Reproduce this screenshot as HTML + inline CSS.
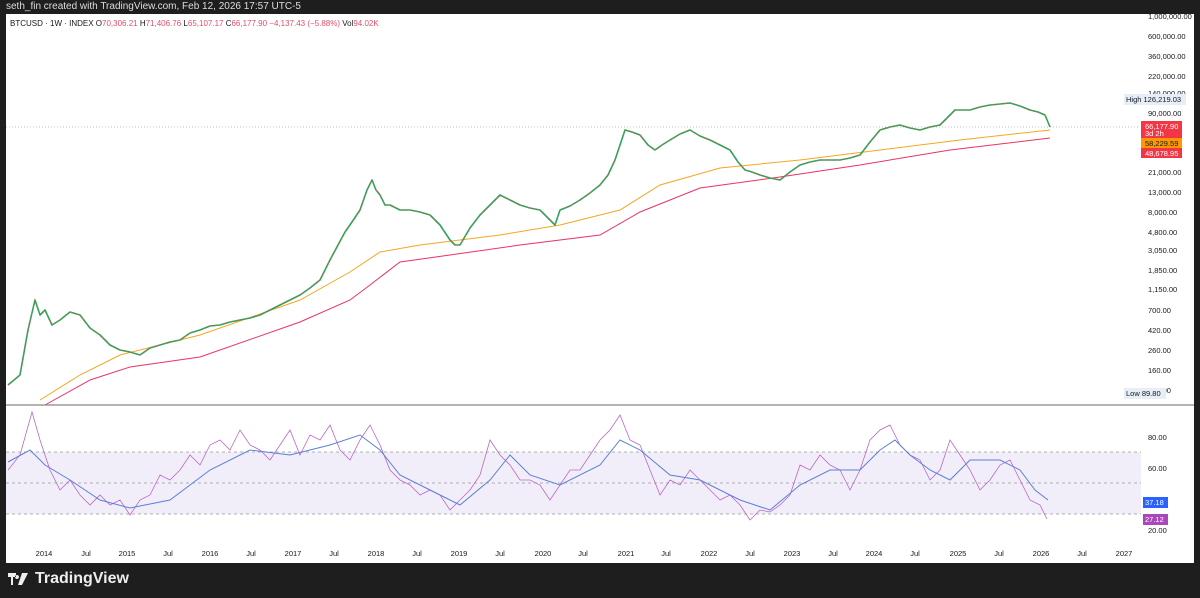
<!DOCTYPE html>
<html><head><meta charset="utf-8"><style>
html,body{margin:0;padding:0;width:1200px;height:598px;background:#1e1e1e;overflow:hidden;font-family:"Liberation Sans",sans-serif}
.top{position:absolute;left:6px;top:0;height:14px;color:#ddd;font-size:10px;line-height:14px}
.chart{position:absolute;left:6px;top:14px;width:1188px;height:549px;background:#fff}
.logo{position:absolute;left:8px;top:570px;color:#eee;font-size:16px;font-weight:bold;display:flex;align-items:center;gap:5px}
</style></head><body>
<div class="top">seth_fin created with TradingView.com, Feb 12, 2026 17:57 UTC-5</div>
<div class="chart">
<svg width="1188" height="549" viewBox="6 14 1188 549" xmlns="http://www.w3.org/2000/svg" font-family="Liberation Sans, sans-serif" font-size="7.5">
<text x="10" y="26" fill="#131722" font-size="8">BTCUSD · 1W · INDEX  O<tspan fill="#e04f6b">70,306.21</tspan> H<tspan fill="#e04f6b">71,406.76</tspan> L<tspan fill="#e04f6b">65,107.17</tspan> C<tspan fill="#e04f6b">66,177.90 −4,137.43 (−5.88%)</tspan> Vol<tspan fill="#e04f6b">94.02K</tspan></text>
<line x1="6" y1="127" x2="1140" y2="127" stroke="#aaa" stroke-dasharray="1,2" stroke-width="0.7"/>
<polyline fill="none" stroke="#f5a623" stroke-width="1" points="40,400 80,375 120,355 200,335 300,300 350,272 380,252 420,245 460,240 500,235 560,225 620,210 660,185 720,168 800,160 880,150 960,140 1050,130"/>
<polyline fill="none" stroke="#e8336a" stroke-width="1" points="45,405 90,380 130,367 200,357 300,322 350,300 370,285 400,262 450,255 520,245 600,235 640,212 700,188 780,177 860,165 950,150 1050,138"/>
<polyline fill="none" stroke="#26a65b" stroke-width="1.6" stroke-linejoin="round" points="8,385 20,375 28,330 35,300 40,315 45,310 52,325 60,320 70,312 80,315 90,328 100,335 110,345 120,350 130,352 140,355 150,348 160,345 170,342 180,340 190,333 200,330 210,326 220,325 230,322 240,320 250,318 260,315 270,310 280,305 290,300 300,295 310,288 320,280 330,260 338,245 345,232 352,222 360,210 367,190 372,180 376,190 380,195 385,205 390,205 400,210 410,210 420,212 430,215 440,225 450,240 455,245 460,245 470,228 480,215 490,205 500,195 510,200 520,205 530,208 540,210 548,218 555,225 560,210 570,206 580,200 590,193 600,185 608,175 615,160 620,145 625,130 632,132 640,135 648,145 655,150 662,145 670,140 680,134 690,130 700,136 710,140 720,145 730,150 738,162 745,170 752,172 760,175 770,178 780,180 790,172 800,165 810,162 820,160 830,160 840,160 850,158 860,155 870,142 880,130 890,127 900,125 910,128 920,130 930,127 940,125 948,117 955,110 962,110 970,110 980,107 990,105 1000,104 1010,103 1020,106 1030,110 1038,112 1045,115 1050,127"/>
<polyline fill="none" stroke="#ef5350" stroke-width="1" stroke-dasharray="2,5" points="8,385 20,375 28,330 35,300 40,315 45,310 52,325 60,320 70,312 80,315 90,328 100,335 110,345 120,350 130,352 140,355 150,348 160,345 170,342 180,340 190,333 200,330 210,326 220,325 230,322 240,320 250,318 260,315 270,310 280,305 290,300 300,295 310,288 320,280 330,260 338,245 345,232 352,222 360,210 367,190 372,180 376,190 380,195 385,205 390,205 400,210 410,210 420,212 430,215 440,225 450,240 455,245 460,245 470,228 480,215 490,205 500,195 510,200 520,205 530,208 540,210 548,218 555,225 560,210 570,206 580,200 590,193 600,185 608,175 615,160 620,145 625,130 632,132 640,135 648,145 655,150 662,145 670,140 680,134 690,130 700,136 710,140 720,145 730,150 738,162 745,170 752,172 760,175 770,178 780,180 790,172 800,165 810,162 820,160 830,160 840,160 850,158 860,155 870,142 880,130 890,127 900,125 910,128 920,130 930,127 940,125 948,117 955,110 962,110 970,110 980,107 990,105 1000,104 1010,103 1020,106 1030,110 1038,112 1045,115 1050,127"/>
<g fill="#131722" text-anchor="start">
<text x="1148" y="19">1,000,000.00</text><text x="1148" y="39">600,000.00</text><text x="1148" y="59">360,000.00</text><text x="1148" y="79">220,000.00</text><text x="1148" y="96">140,000.00</text><text x="1148" y="116">90,000.00</text><text x="1148" y="175">21,000.00</text><text x="1148" y="195">13,000.00</text><text x="1148" y="215">8,000.00</text><text x="1148" y="235">4,800.00</text><text x="1148" y="253">3,050.00</text><text x="1148" y="273">1,850.00</text><text x="1148" y="292">1,150.00</text><text x="1148" y="313">700.00</text><text x="1148" y="333">420.00</text><text x="1148" y="353">260.00</text><text x="1148" y="373">160.00</text><text x="1148" y="393">100.00</text>
</g>
<rect x="1124" y="94" width="62" height="11" fill="#e8eef5"/><text x="1126" y="102" fill="#131722">High  126,219.03</text>
<rect x="1124" y="388" width="42" height="11" fill="#e8eef5"/><text x="1126" y="396" fill="#131722">Low  89.80</text>
<rect x="1141" y="121" width="41" height="17" fill="#f23645"/><text x="1145" y="129" fill="#fff">66,177.90</text><text x="1145" y="136" fill="#fff">3d 2h</text>
<rect x="1141" y="138" width="41" height="10" fill="#ff9800"/><text x="1145" y="146" fill="#131722">58,229.59</text>
<rect x="1141" y="148" width="41" height="10" fill="#f23645"/><text x="1145" y="156" fill="#fff">48,678.95</text>
<line x1="6" y1="405" x2="1194" y2="405" stroke="#888" stroke-width="1.2"/>
<rect x="6" y="452" width="1135" height="62" fill="#7e57c2" opacity="0.1"/>
<g stroke="#999" stroke-dasharray="3,3" stroke-width="0.8"><line x1="6" y1="452" x2="1141" y2="452"/><line x1="6" y1="483" x2="1141" y2="483"/><line x1="6" y1="514" x2="1141" y2="514"/></g>
<polyline fill="none" stroke="#ba68c8" stroke-width="0.8" points="8,470 20,455 32,412 40,440 50,470 60,490 70,480 80,495 90,505 100,495 110,505 120,500 130,515 140,500 150,495 160,475 170,480 180,470 190,455 200,465 210,445 220,440 230,450 240,430 250,445 260,450 270,460 280,445 290,430 300,455 310,435 320,440 330,425 340,450 350,460 360,440 370,425 380,445 390,470 400,480 410,485 420,495 430,490 440,495 450,510 460,500 470,490 480,475 490,440 500,455 510,465 520,480 530,480 540,485 550,500 560,485 570,470 580,470 590,455 600,440 610,430 620,415 630,440 640,445 650,470 660,495 670,480 680,485 690,470 700,480 710,490 720,500 730,495 740,505 750,520 760,510 770,512 780,505 790,495 800,465 810,470 820,455 830,465 840,470 850,490 860,470 870,440 880,430 890,425 900,445 910,455 920,460 930,480 940,470 950,440 960,455 970,470 980,490 990,480 1000,465 1010,460 1020,480 1030,500 1040,505 1047,519"/>
<polyline fill="none" stroke="#5b7fd6" stroke-width="1" points="8,462 30,450 45,465 70,480 100,500 130,508 170,500 210,470 250,450 290,455 330,445 360,435 380,450 400,475 430,490 460,505 490,480 510,455 530,475 560,485 600,465 620,440 640,450 670,475 700,480 740,500 770,510 800,485 830,470 860,470 880,450 895,440 910,455 930,470 950,480 970,460 1000,460 1020,470 1035,490 1048,500"/>
<g fill="#131722"><text x="1148" y="440">80.00</text><text x="1148" y="471">60.00</text><text x="1148" y="533">20.00</text></g>
<rect x="1143" y="497" width="25" height="11" fill="#2962ff"/><text x="1145" y="505" fill="#fff">37.18</text>
<rect x="1143" y="514" width="25" height="11" fill="#ab47bc"/><text x="1145" y="522" fill="#fff">27.12</text>
<g fill="#131722" text-anchor="middle" font-size="7.5">
<text x="44" y="556">2014</text><text x="86" y="556">Jul</text><text x="127" y="556">2015</text><text x="168" y="556">Jul</text><text x="210" y="556">2016</text><text x="251" y="556">Jul</text><text x="293" y="556">2017</text><text x="334" y="556">Jul</text><text x="376" y="556">2018</text><text x="417" y="556">Jul</text><text x="459" y="556">2019</text><text x="500" y="556">Jul</text><text x="543" y="556">2020</text><text x="583" y="556">Jul</text><text x="626" y="556">2021</text><text x="666" y="556">Jul</text><text x="709" y="556">2022</text><text x="750" y="556">Jul</text><text x="792" y="556">2023</text><text x="833" y="556">Jul</text><text x="874" y="556">2024</text><text x="915" y="556">Jul</text><text x="958" y="556">2025</text><text x="999" y="556">Jul</text><text x="1041" y="556">2026</text><text x="1082" y="556">Jul</text><text x="1124" y="556">2027</text>
</g>
</svg>
</div>
<div class="logo"><svg width="22" height="12" viewBox="0 0 22 12"><path d="M0 0h8v4H5v8H3V4H0z M9 2a2 2 0 1 0 0.01 0z M14 0h6l-6 12h-4z" fill="#eee"/></svg><span>TradingView</span></div>
</body></html>
